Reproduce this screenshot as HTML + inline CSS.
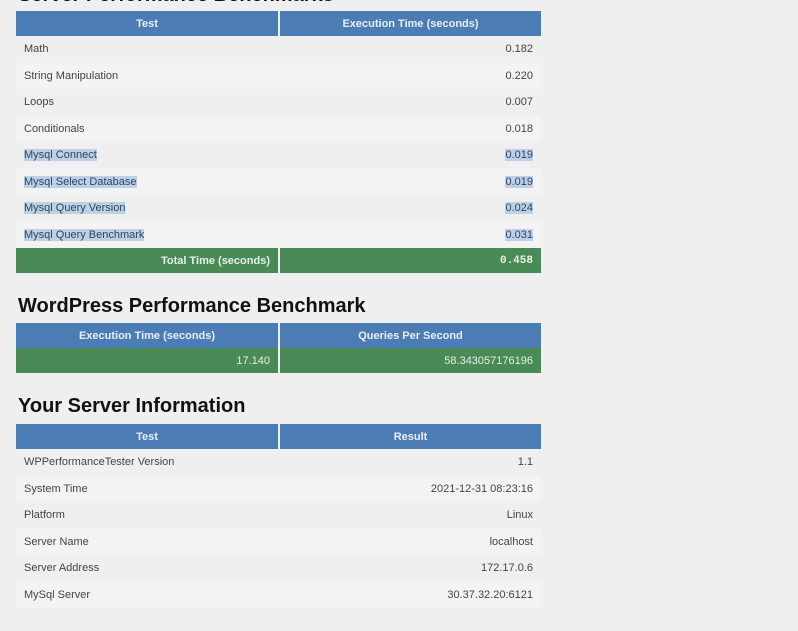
<!DOCTYPE html>
<html><head><style>
body{margin:0;width:798px;height:631px;background:#efefef;font-family:"Liberation Sans",sans-serif;position:relative;overflow:hidden}
.t{position:absolute;left:16px;width:525px;border-collapse:separate;border-spacing:0}
.t td,.t th{padding:0 8px;font-size:11px;height:26.5px;color:#444}
.t th{background:#4b7db4;color:#e8eef6;font-weight:bold;height:25px;text-align:center}
.t th:first-child,.t td:first-child{width:246px}
.t th:first-child,.g td:first-child{border-right:2px solid #efefef}
.t td:last-child{text-align:right}
.t tr:nth-child(odd) td{background:#f3f3f3}
.g td{background:#4a8a56!important;color:#e6f0e6!important;font-weight:bold;height:25px}
.sel{background:#bcd0ea;color:#345}
h2{position:absolute;left:18px;margin:0;font-size:20px;font-weight:bold;color:#111}
</style></head><body>
<h2 style="top:-16px">Server Performance Benchmarks</h2>
<table class="t" style="top:11px">
<tr><th>Test</th><th>Execution Time (seconds)</th></tr>
<tr><td>Math</td><td>0.182</td></tr>
<tr><td>String Manipulation</td><td>0.220</td></tr>
<tr><td>Loops</td><td>0.007</td></tr>
<tr><td>Conditionals</td><td>0.018</td></tr>
<tr><td><span class="sel">Mysql Connect</span></td><td><span class="sel">0.019</span></td></tr>
<tr><td><span class="sel">Mysql Select Database</span></td><td><span class="sel">0.019</span></td></tr>
<tr><td><span class="sel">Mysql Query Version</span></td><td><span class="sel">0.024</span></td></tr>
<tr><td><span class="sel">Mysql Query Benchmark</span></td><td><span class="sel">0.031</span></td></tr>
<tr class="g"><td style="text-align:right">Total Time (seconds)</td><td style="font-family:'Liberation Mono',monospace">0.458</td></tr>
</table>
<h2 style="top:295px">WordPress Performance Benchmark</h2>
<table class="t" style="top:323px">
<tr><th>Execution Time (seconds)</th><th>Queries Per Second</th></tr>
<tr class="g"><td style="text-align:right;font-weight:normal">17.140</td><td style="font-weight:normal">58.343057176196</td></tr>
</table>
<h2 style="top:395px">Your Server Information</h2>
<table class="t" style="top:424px">
<tr><th>Test</th><th>Result</th></tr>
<tr><td>WPPerformanceTester Version</td><td>1.1</td></tr>
<tr><td>System Time</td><td>2021-12-31 08:23:16</td></tr>
<tr><td>Platform</td><td>Linux</td></tr>
<tr><td>Server Name</td><td>localhost</td></tr>
<tr><td>Server Address</td><td>172.17.0.6</td></tr>
<tr><td>MySql Server</td><td>30.37.32.20:6121</td></tr>
</table>
</body></html>
